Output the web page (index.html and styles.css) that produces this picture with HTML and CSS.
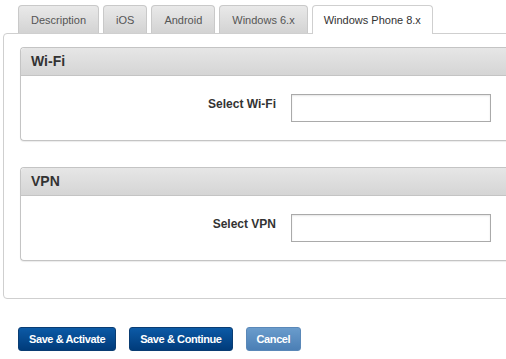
FILE: index.html
```html
<!DOCTYPE html>
<html lang="en">
<head>
    <meta charset="UTF-8">
    <title>Profile Settings</title>
    <link rel="stylesheet" href="styles.css">
</head>
<body>
    <div class="page">
        <ul class="tabs">
            <li class="tab">Description</li>
            <li class="tab">iOS</li>
            <li class="tab">Android</li>
            <li class="tab">Windows 6.x</li>
            <li class="tab active">Windows Phone 8.x</li>
        </ul>

        <div class="tab-content">
            <div class="panel">
                <div class="panel-header">Wi-Fi</div>
                <div class="panel-body">
                    <label class="field-label" for="wifi">Select Wi-Fi</label>
                    <input type="text" id="wifi" class="field-input">
                </div>
            </div>

            <div class="panel">
                <div class="panel-header">VPN</div>
                <div class="panel-body">
                    <label class="field-label" for="vpn">Select VPN</label>
                    <input type="text" id="vpn" class="field-input">
                </div>
            </div>
        </div>

        <div class="actions">
            <button class="btn">Save &amp; Activate</button>
            <button class="btn">Save &amp; Continue</button>
            <button class="btn btn-light">Cancel</button>
        </div>
    </div>
</body>
</html>
```

FILE: styles.css
```css
* {
    margin: 0;
    padding: 0;
    box-sizing: border-box;
}

body {
    font-family: "Liberation Sans", Arial, sans-serif;
    background-color: #fff;
    overflow: hidden;
}

.page {
    width: 560px;
    padding: 5px 0 0 3px;
}

.tabs {
    list-style: none;
    display: flex;
    gap: 4px;
    padding-left: 15px;
    position: relative;
    z-index: 1;
}

.tab {
    height: 28px;
    line-height: 29px;
    padding: 0 12px;
    font-size: 11px;
    color: #555;
    background: linear-gradient(#e9e9e9, #d3d3d3);
    border: 1px solid #c9c9c9;
    border-bottom: none;
    border-radius: 4px 4px 0 0;
}

.tab.active {
    height: 29px;
    padding: 0 11px;
    color: #333;
    background: #fff;
    border-color: #cfcfcf;
}

.tab-content {
    margin-top: -1px;
    border: 1px solid #cfcfcf;
    border-radius: 4px 0 0 4px;
    padding: 13px 0 37px 16px;
    display: flex;
    flex-direction: column;
    gap: 26px;
}

.panel {
    border: 1px solid #c4c4c4;
    border-right: none;
    border-radius: 4px 0 0 4px;
    box-shadow: 0 1px 1px rgba(0, 0, 0, 0.08);
}

.panel-header {
    height: 28px;
    line-height: 26px;
    padding-left: 10px;
    font-size: 14px;
    font-weight: bold;
    color: #333;
    background: linear-gradient(#e6e6e6, #d5d5d5);
    border-bottom: 1px solid #c4c4c4;
    border-radius: 4px 0 0 0;
}

.panel-body {
    height: 64px;
    display: flex;
    align-items: center;
}

.field-label {
    width: 255px;
    text-align: right;
    font-size: 12px;
    font-weight: bold;
    color: #333;
    margin-top: -9px;
}

.field-input {
    margin-left: 15px;
    width: 200px;
    height: 28px;
    border: 1px solid #aaa;
    box-shadow: inset 0 1px 2px rgba(0, 0, 0, 0.1);
    font-size: 12px;
}

.actions {
    display: flex;
    gap: 13px;
    padding: 28px 0 0 15px;
}

.btn {
    height: 24px;
    padding: 0 10px;
    font-family: "Liberation Sans", Arial, sans-serif;
    font-size: 11px;
    font-weight: bold;
    letter-spacing: -0.4px;
    color: #fff;
    background: linear-gradient(#0c5aa6, #003b7a);
    border: 1px solid #0a3d73;
    border-radius: 3px;
    cursor: pointer;
}

.btn-light {
    background: linear-gradient(#6a9ccc, #4b7fb5);
    border-color: #5a88b8;
}
```
